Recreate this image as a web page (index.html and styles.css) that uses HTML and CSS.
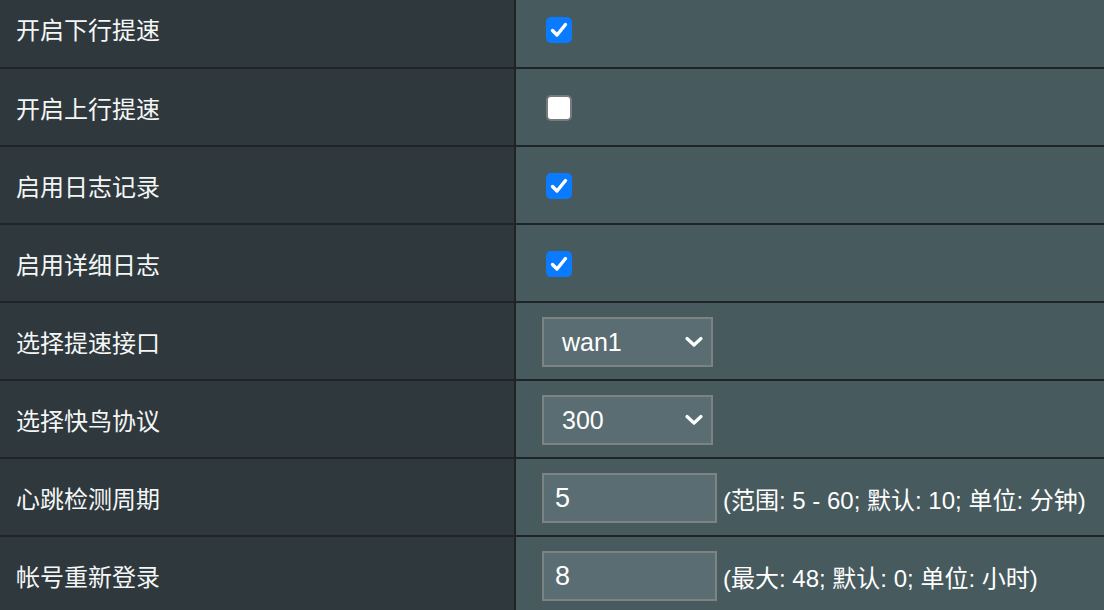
FILE: index.html
```html
<!DOCTYPE html>
<html lang="zh-CN">
<head>
  <meta charset="UTF-8" />
  <title>快鸟加速设置</title>
  <link rel="stylesheet" href="styles.css">
</head>
<body>
  <table class="settings">
    <tr>
      <th>开启下行提速</th>
      <td><span class="checkbox checked"><svg viewBox="0 0 26 26" width="26" height="26"><path d="M6.5 13.5 L11 18 L19.5 7.5" fill="none" stroke="#fff" stroke-width="3.4" stroke-linecap="round" stroke-linejoin="round"/></svg></span></td>
    </tr>
    <tr>
      <th>开启上行提速</th>
      <td><span class="checkbox"></span></td>
    </tr>
    <tr>
      <th>启用日志记录</th>
      <td><span class="checkbox checked"><svg viewBox="0 0 26 26" width="26" height="26"><path d="M6.5 13.5 L11 18 L19.5 7.5" fill="none" stroke="#fff" stroke-width="3.4" stroke-linecap="round" stroke-linejoin="round"/></svg></span></td>
    </tr>
    <tr>
      <th>启用详细日志</th>
      <td><span class="checkbox checked"><svg viewBox="0 0 26 26" width="26" height="26"><path d="M6.5 13.5 L11 18 L19.5 7.5" fill="none" stroke="#fff" stroke-width="3.4" stroke-linecap="round" stroke-linejoin="round"/></svg></span></td>
    </tr>
    <tr>
      <th>选择提速接口</th>
      <td>
        <div class="select">
          <span>wan1</span>
          <svg class="chevron" viewBox="0 0 20 12" width="20" height="12"><path d="M3 2.5 L10 9 L17 2.5" fill="none" stroke="#fff" stroke-width="3.2" stroke-linecap="round" stroke-linejoin="round"/></svg>
        </div>
      </td>
    </tr>
    <tr>
      <th>选择快鸟协议</th>
      <td>
        <div class="select">
          <span>300</span>
          <svg class="chevron" viewBox="0 0 20 12" width="20" height="12"><path d="M3 2.5 L10 9 L17 2.5" fill="none" stroke="#fff" stroke-width="3.2" stroke-linecap="round" stroke-linejoin="round"/></svg>
        </div>
      </td>
    </tr>
    <tr>
      <th>心跳检测周期</th>
      <td>
        <div class="field">
          <input type="text" class="text-input" value="5">
          <span class="hint">(范围: 5 - 60; 默认: 10; 单位: 分钟)</span>
        </div>
      </td>
    </tr>
    <tr>
      <th>帐号重新登录</th>
      <td>
        <div class="field">
          <input type="text" class="text-input" value="8">
          <span class="hint">(最大: 48; 默认: 0; 单位: 小时)</span>
        </div>
      </td>
    </tr>
  </table>
</body>
</html>
```

FILE: styles.css
```css
* {
  margin: 0;
  padding: 0;
  box-sizing: border-box;
}

body {
  background-color: #475a5e;
  color: #fff;
  font-family: "Liberation Sans", "Noto Sans CJK SC", sans-serif;
  font-size: 24px;
  overflow: hidden;
}

.settings {
  width: 100%;
  border-collapse: collapse;
  margin-top: -10px;
}

.settings tr {
  height: 78px;
  border-bottom: 2px solid #1f2427;
}

.settings th {
  width: 515px;
  background-color: #2e383d;
  border-right: 2px solid #1f2427;
  text-align: left;
  font-weight: normal;
  font-size: 24px;
  padding-left: 16px;
  color: #f4f6f6;
}

.settings td {
  background-color: #475a5e;
  padding-left: 26px;
  padding-top: 2px;
}

.checkbox {
  display: block;
  width: 26px;
  height: 26px;
  margin-left: 4px;
  border-radius: 5px;
  background-color: #fff;
  border: 2px solid #777b7c;
}

.checkbox.checked {
  background-color: #0a7bff;
  border: none;
}

.checkbox svg {
  display: block;
}

.select {
  width: 171px;
  height: 50px;
  display: flex;
  align-items: center;
  justify-content: space-between;
  padding: 0 7px 0 18px;
  background-color: #596d72;
  border: 2px solid #7d8283;
  font-size: 25px;
}

.chevron {
  display: block;
}

.field {
  display: flex;
  align-items: center;
  gap: 6px;
}

.text-input {
  width: 175px;
  height: 50px;
  padding: 0 11px;
  background-color: #596d72;
  border: 2px solid #7d8283;
  color: #fff;
  font-family: "Liberation Sans", "Noto Sans CJK SC", sans-serif;
  font-size: 27px;
  outline: none;
}

.hint {
  font-size: 24px;
  white-space: nowrap;
}
```
